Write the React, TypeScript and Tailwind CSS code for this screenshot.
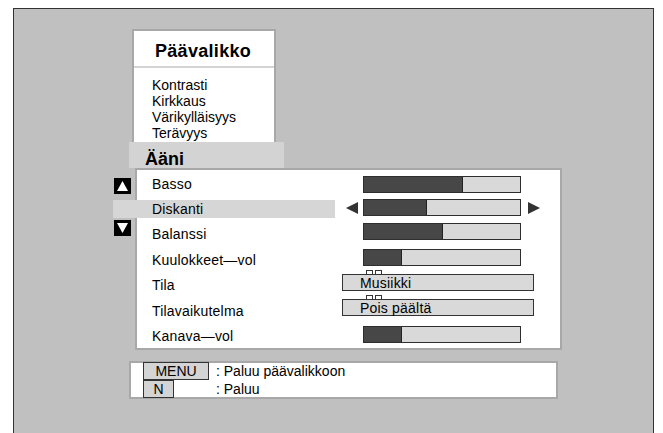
import React from "react";

type Row = {
  label: string;
  kind: "bar" | "box";
  fill?: number;
  value?: string;
  selected?: boolean;
  h: string;
  shift: string;
};

const rows: Row[] = [
  { label: "Basso", kind: "bar", fill: 99, h: "h-[24px]", shift: "mb-[0px]" },
  { label: "Diskanti", kind: "bar", fill: 63, selected: true, h: "h-[25px]", shift: "mb-[2px]" },
  { label: "Balanssi", kind: "bar", fill: 79, h: "h-[26px]", shift: "mb-[6px]" },
  { label: "Kuulokkeet—vol", kind: "bar", fill: 38, h: "h-[25px]", shift: "mb-[4px]" },
  { label: "Tila", kind: "box", value: "Musiikki", h: "h-[26px]", shift: "mb-[6px]" },
  { label: "Tilavaikutelma", kind: "box", value: "Pois päältä", h: "h-[26px]", shift: "mb-[7px]" },
  { label: "Kanava—vol", kind: "bar", fill: 38, h: "h-[24px]", shift: "mb-[3px]" },
];

const mainItems = ["Kontrasti", "Kirkkaus", "Värikylläisyys", "Terävyys"];

const Bar = ({ fill }: { fill: number }) => (
  <div className="flex w-[158px] h-[17px] border border-[#2e2e2e] bg-[#d9d9d9]">
    <div className="h-full bg-[#474747] border-r border-[#222]" style={{ width: fill }} />
  </div>
);

const ValueBox = ({ value }: { value: string }) => (
  <div className="relative w-[192px] h-[17px] border border-[#333] bg-[#d9d9d9] pl-[17px] text-[14px] leading-[16px] tracking-[0.2px]">
    {value}
    <span className="absolute left-[23px] -top-[5px] w-[7px] h-[5px] border border-[#333] bg-white" />
    <span className="absolute left-[32px] -top-[5px] w-[7px] h-[5px] border border-[#333] bg-white" />
  </div>
);

const ArrowSquare = ({ up }: { up: boolean }) => (
  <div className="w-[17px] h-[16px] bg-black">
    <svg width="17" height="16" viewBox="0 0 17 16">
      <polygon points={up ? "3,13 8.5,3 14,13" : "3,3 14,3 8.5,13"} fill="#fff" />
    </svg>
  </div>
);

const SideArrow = ({ left }: { left: boolean }) => (
  <svg width="12" height="12" viewBox="0 0 12 12">
    <polygon points={left ? "12,0 0,6 12,12" : "0,0 12,6 0,12"} fill="#333" />
  </svg>
);

export default function App() {
  return (
    <div className="w-[663px] h-[433px] overflow-hidden bg-white pl-[13px] pt-[8px] text-black font-['Liberation_Sans',Arial,sans-serif]">
      <div className="w-[641px] h-[440px] border-l border-t border-r border-[#333] bg-[#c0c0c0] flex flex-col">
        {/* main menu */}
        <div className="ml-[118px] mt-[20px] w-[144px] h-[113px] border-2 border-b-0 border-[#a8a8a8] bg-white overflow-hidden">
          <div className="h-[35px] pt-[9px] pl-[21px] text-[18px] font-bold leading-[22px] tracking-[0.3px]">Päävalikko</div>
          <div className="h-[2px] bg-[#d4d4d4]" />
          <div className="pt-[9px] pl-[18px] text-[14px] leading-[16px]">
            {mainItems.map((item) => (
              <div key={item}>{item}</div>
            ))}
          </div>
        </div>

        <div className="ml-[115px] w-[155px] h-[26px] bg-[#d3d3d3] pl-[16px] pt-[8px] text-[18px] font-bold leading-[18px]">Ääni</div>

        {/* sub menu */}
        <div className="flex items-start ml-[100px]">
          <div className="flex flex-col w-[17px] mt-[10px]">
            <ArrowSquare up />
            <div className="mt-[26px]">
              <ArrowSquare up={false} />
            </div>
          </div>
          <div className="ml-[4px] w-[427px] h-[182px] border-2 border-[#a8a8a8] bg-white pt-[2px]">
            {rows.map((row) => (
              <div key={row.label} className={`flex items-center ${row.h}`}>
                {row.selected ? (
                  <>
                    <div className="-ml-[24px] w-[222px] h-[18px] bg-[#d6d6d6] pl-[39px] text-[14px] leading-[18px] tracking-[0.2px]">
                      {row.label}
                    </div>
                    <div className={`ml-[11px] flex items-center ${row.shift}`}>
                      <SideArrow left />
                      <div className="ml-[5px]">
                        <Bar fill={row.fill ?? 0} />
                      </div>
                      <div className="ml-[7px]">
                        <SideArrow left={false} />
                      </div>
                    </div>
                  </>
                ) : (
                  <>
                    <div className="w-[205px] pl-[15px] text-[14px] leading-[16px] tracking-[0.2px]">{row.label}</div>
                    {row.kind === "bar" ? (
                      <div className={`ml-[21px] ${row.shift}`}>
                        <Bar fill={row.fill ?? 0} />
                      </div>
                    ) : (
                      <div className={row.shift}>
                        <ValueBox value={row.value ?? ""} />
                      </div>
                    )}
                  </>
                )}
              </div>
            ))}
          </div>
        </div>

        {/* help */}
        <div className="ml-[115px] mt-[11px] w-[429px] h-[38px] border-2 border-[#a8a8a8] bg-white text-[14px] leading-[16px]">
          <div className="-mt-[1px] ml-[12px] flex flex-col">
            <div className="flex items-center h-[18px]">
              <div className="w-[66px] h-[18px] border border-[#333] bg-[#d4d4d4] flex items-center justify-center">MENU</div>
              <span className="ml-[7px]">: Paluu päävalikkoon</span>
            </div>
            <div className="flex items-center h-[18px]">
              <div className="w-[31px] h-[18px] border border-[#333] bg-[#d4d4d4] flex items-center justify-center">N</div>
              <span className="ml-[42px]">: Paluu</span>
            </div>
          </div>
        </div>
      </div>
    </div>
  );
}
